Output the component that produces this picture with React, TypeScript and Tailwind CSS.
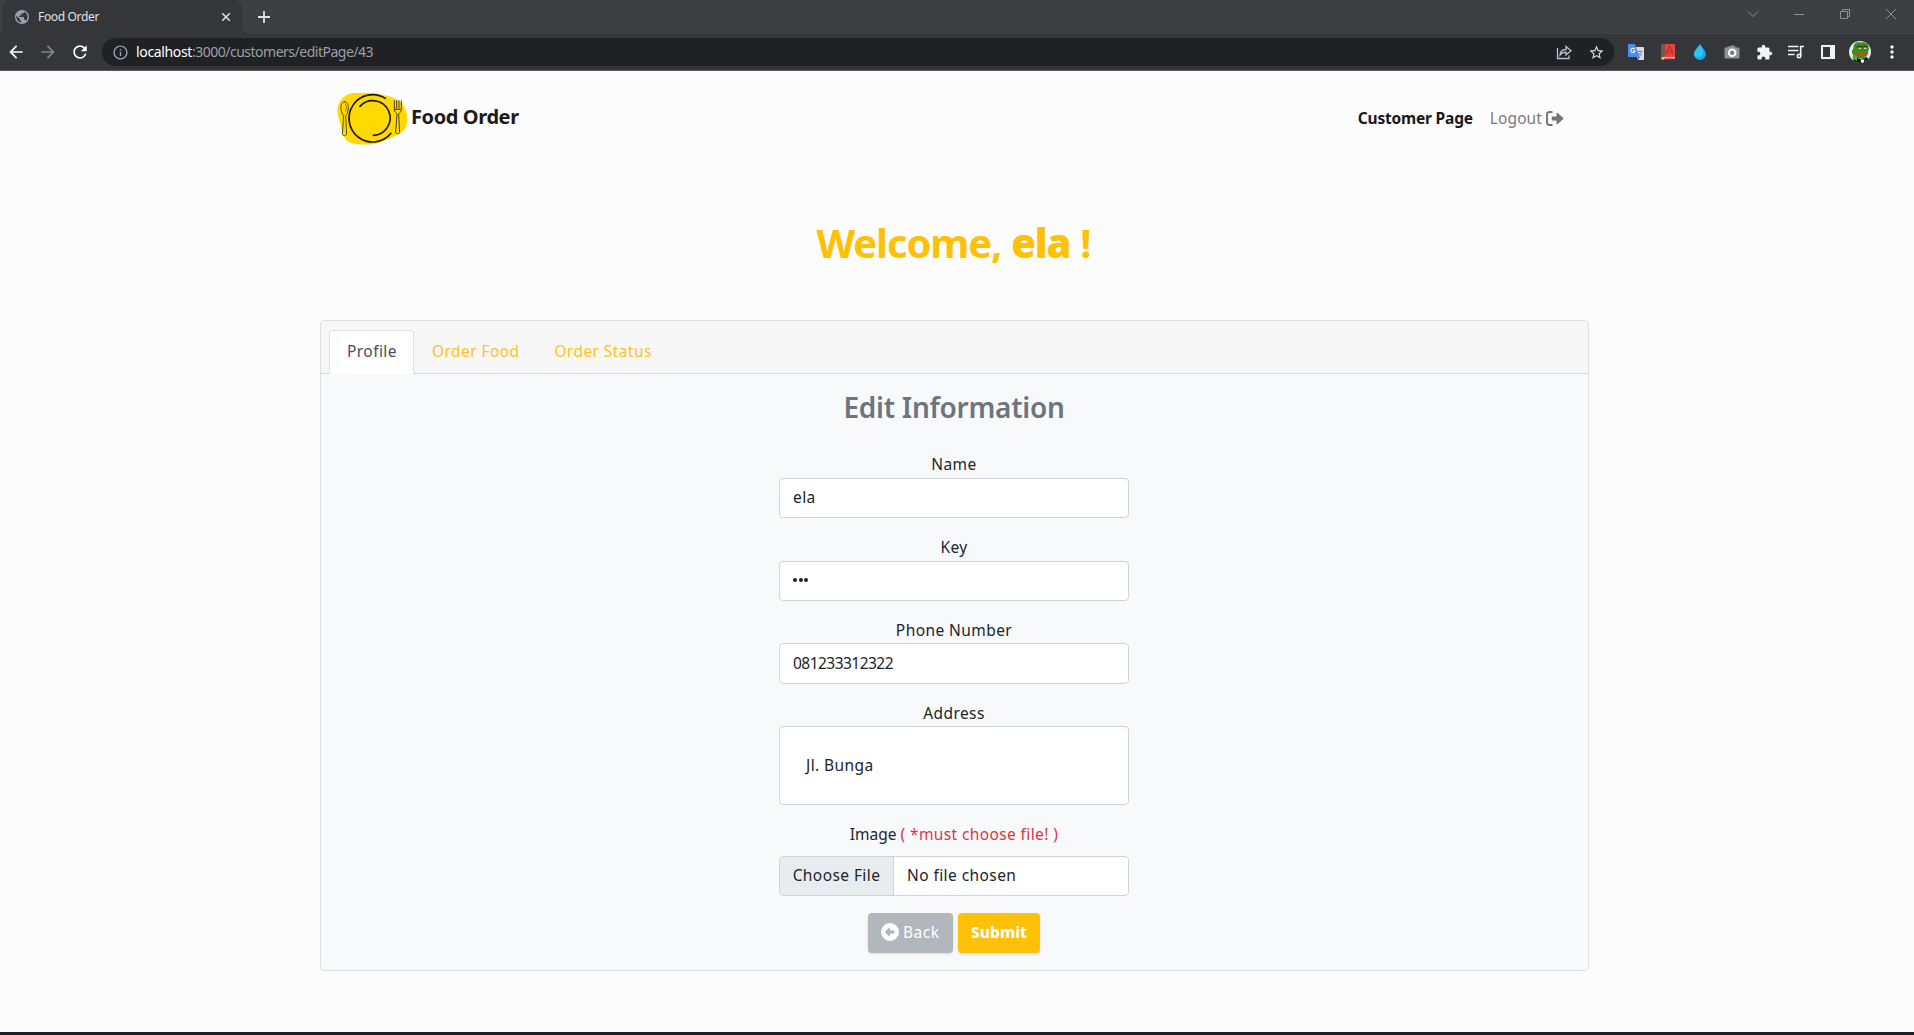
import React from "react";
import {
  MdArrowBack,
  MdArrowForward,
  MdRefresh,
  MdInfoOutline,
  MdStarBorder,
  MdExtension,
  MdMoreVert,
  MdPublic,
} from "react-icons/md";
import { FaCircleLeft } from "react-icons/fa6";

function TabStrip() {
  return (
    <div className="flex h-[34px] items-stretch bg-[#3c4043]">
      <div className="flex w-[2px] shrink-0 items-end bg-[#35363a]">
        <div className="h-full w-full rounded-br-[2px] bg-[#3c4043]" />
      </div>
      <div className="flex w-60 items-center rounded-t-lg bg-[#35363a] pr-[9px] pl-3">
        <MdPublic className="size-4 scale-105 text-[#9aa0a6]" />
        <span className="ml-2 flex-1 text-[12px] tracking-[-0.34px] text-[#dfe1e5]">Food Order</span>
        <svg className="size-[14px]" viewBox="0 0 14 14" stroke="#dfe1e5" strokeWidth="1.5">
          <path d="M3.2 3.2l7.6 7.6M10.8 3.2l-7.6 7.6" />
        </svg>
      </div>
      <div className="flex w-2 bg-[#35363a]">
        <div className="w-full rounded-bl-lg bg-[#3c4043]" />
      </div>
      <div className="flex w-7 items-center justify-center">
        <svg className="size-[14px]" viewBox="0 0 14 14" stroke="#dfe1e5" strokeWidth="1.8">
          <path d="M7 1v12M1 7h12" />
        </svg>
      </div>
      <div className="flex flex-1 justify-end">
        <WindowButton d="M2 4.5l5 5 5-5" />
        <WindowButton d="M2 7.5h10" />
        <WindowButton d="M2.5 4.5h7v7h-7zM4.5 4.5v-2h7v7h-2" />
        <WindowButton d="M2 2l10 10M12 2L2 12" />
      </div>
    </div>
  );
}

function WindowButton({ d }: { d: string }) {
  return (
    <div className="flex w-[46px] items-center justify-center pb-[6px]">
      <svg className="size-[14px]" viewBox="0 0 14 14" fill="none" stroke="#8e9193" strokeWidth="1">
        <path d={d} />
      </svg>
    </div>
  );
}

function Cell({ children }: { children: React.ReactNode }) {
  return <div className="flex w-8 shrink-0 items-center justify-center">{children}</div>;
}

function TranslateIcon() {
  return (
    <svg className="size-4" viewBox="0 0 16 16">
      <path d="M6 3h9a1 1 0 0 1 1 1v11a1 1 0 0 1-1 1h-5z" fill="#dadce0" />
      <path d="M9.5 7.5h5M12 6.2v1.3M13.7 7.5c-.5 2.3-1.8 3.6-3.4 4.6M10.6 9c.7 1.4 1.8 2.5 3.2 3.2" stroke="#80868b" strokeWidth="0.9" fill="none" />
      <path d="M10 13l2 0-2 3z" fill="#3367d6" />
      <path d="M1 0h6l4.5 13H1a1 1 0 0 1-1-1V1a1 1 0 0 1 1-1z" fill="#4c8bf5" />
      <path d="M6.6 5.2A2.1 2.1 0 1 0 6.9 7H5" stroke="#fff" strokeWidth="1.1" fill="none" />
    </svg>
  );
}

function BookIcon() {
  return (
    <svg className="size-4" viewBox="0 0 16 16">
      <path d="M1 0h3.5v13H1z" fill="#6b5a5a" />
      <path d="M4.5 0h10.5v13H4.5z" fill="#e5443a" />
      <path d="M6 10.5L9 2.500h1l3 8M7 8h5" stroke="#b52f27" strokeWidth="1.2" fill="none" />
      <path d="M1 13h14v2.500H1z" fill="#b93028" />
      <path d="M4 13.2h11v1.100H4z" fill="#f1e7e4" />
      <path d="M1.5 13h2.500v3l-1.200-.8-1.300.8z" fill="#f6c026" />
    </svg>
  );
}

function DropIcon() {
  return (
    <svg className="size-4" viewBox="0 0 16 16">
      <path d="M8 0C9 2.5 14 6.5 14 10.2A6 5.800 0 0 1 2 10.2C2 6.5 7 2.5 8 0z" fill="#1ea7e8" />
      <path d="M8 0C9 2.5 11.5 6 11 9.500S6 14 2.600 12C0 7.500 7 3 8 0z" fill="#2cc3f5" />
    </svg>
  );
}

function CameraIcon() {
  return (
    <svg className="size-4" viewBox="0 0 16 16">
      <path d="M1 3.500h2.500V2.200h2v1.300L6.500 1.500h4l1 2H14.500a1 1 0 0 1 1 1V13a1.500 1.500 0 0 1-1.500 1.500H2A1.500 1.500 0 0 1 .5 13V4z" fill="#929292" />
      <circle cx="8.2" cy="8.8" r="3.3" fill="#7c7c7c" stroke="#fff" strokeWidth="2" />
    </svg>
  );
}

function FrogAvatar() {
  return (
    <svg className="size-[22px]" viewBox="0 0 22 22">
      <defs>
        <clipPath id="avatar">
          <circle cx="11" cy="11" r="11" />
        </clipPath>
      </defs>
      <g clipPath="url(#avatar)">
        <path d="M0 0h22v22H0z" fill="#dff0f2" />
        <path d="M3 22l2-6 7 2 6-2 3 6z" fill="#15191f" />
        <path d="M11.5 18.500h4l-1 3.500h-2z" fill="#fff" />
        <path d="M4.500 7C4 2 8 .5 12 1.500c3-1 7 0 7.300 3.500 1 2 .5 4-.3 5.500.5 4-3 7-7.500 7S4 15 3.200 12C2.500 10 3.500 8.500 4.500 7z" fill="#3f8d18" />
        <path d="M3.500 15c2-2 4-1 4.500 1.500l0 3.500-4-2z" fill="#5aa72b" />
        <path d="M7.500 6c2-1.200 3.500-1 5 .2 1.500-1.200 4-1.200 6-.2" stroke="#1f4d0e" strokeWidth="1.3" fill="none" />
        <path d="M9.500 7.300h2.500M15 7.300h2.500" stroke="#e8eee2" strokeWidth="1" />
        <path d="M6 11.500c4 1.500 9 1.500 13.200 0M7.500 13c4 1.200 7 1.200 10.500 0" stroke="#b8502a" strokeWidth="1.500" fill="none" />
      </g>
    </svg>
  );
}

function Toolbar() {
  return (
    <div className="flex h-[37px] items-stretch border-b border-[#5b5660] bg-[#35363a] pt-1 pb-1">
      <div className="flex w-[102px] shrink-0">
        <Cell><MdArrowBack className="mr-px size-[20px] text-white" /></Cell>
        <Cell><MdArrowForward className="mr-px size-[20px] text-[#85878a]" /></Cell>
        <Cell><MdRefresh className="size-5 text-white" /></Cell>
      </div>
      <div className="flex flex-1 items-stretch rounded-full bg-[#202124] pr-[2px] pl-[10px]">
        <div className="flex w-[24px] items-center">
          <MdInfoOutline className="size-[17px] text-[#9aa0a6]" />
        </div>
        <div className="flex flex-1 items-center pb-px text-[14px] text-[#9aa0a6]">
          <span className="tracking-[-0.35px] text-white">localhost</span>
          <span className="tracking-[-0.5px]">:3000/customers/editPage/43</span>
        </div>
        <Cell>
          <svg className="size-4" viewBox="0 0 16 16" fill="none" stroke="#bdc1c6" strokeWidth="1.3">
            <path d="M1.500 4v10.500h11.500V11.500" />
            <path d="M4 11c.3-3.500 2.500-5.500 6-5.500V2.500l5 4.300-5 4V8.200C7.500 8.200 5.500 9 4 11z" />
          </svg>
        </Cell>
        <Cell><MdStarBorder className="size-[17px] text-[#dadce0]" /></Cell>
      </div>
      <div className="ml-[6px] flex shrink-0 pr-[6px]">
        <Cell><TranslateIcon /></Cell>
        <Cell><BookIcon /></Cell>
        <Cell><DropIcon /></Cell>
        <Cell><CameraIcon /></Cell>
        <Cell><MdExtension className="size-[17px] text-[#f1f3f4]" /></Cell>
        <Cell>
          <svg className="size-4" viewBox="0 0 16 16" fill="none" stroke="#f1f3f4" strokeWidth="1.6">
            <path d="M0 2.500h10.500M0 6.500h10.500M0 10.500h6.500M12.700 12V2.500H16" />
            <circle cx="11" cy="12" r="1.7" />
          </svg>
        </Cell>
        <Cell>
          <div className="h-[14px] w-[14px] border-2 border-r-[5px] border-[#f1f3f4]" />
        </Cell>
        <Cell><FrogAvatar /></Cell>
        <Cell><MdMoreVert className="size-5 text-[#f1f3f4]" /></Cell>
      </div>
    </div>
  );
}

function Logo() {
  return (
    <svg className="h-[54px] w-[72px]" viewBox="48 36 216 162" fill="none" strokeLinecap="round">
      <path d="M100 39H150C185 42 225 50 243 68C262 85 266 120 258 140C250 160 215 172 190 183C165 197 120 196 92 188C72 182 68 160 62 135C57 118 52 100 52 90C54 62 78 40 100 39Z" fill="#ffd900" />
      <path d="M196 55A71 71 0 1 0 213 160" stroke="#1d1a05" strokeWidth="5" />
      <path d="M120 79A52 52 0 1 1 160 166" stroke="#1d1a05" strokeWidth="5" />
      <path d="M74 65C63 65 61 80 64 92C66 102 70 105 71 108L67 163C68 168 79 168 80 163L77 108C80 104 85 96 85 84C85 72 81 65 74 65Z" stroke="#5e510a" strokeWidth="3" />
      <path d="M76 72C81 78 80 88 77 94" stroke="#5e510a" strokeWidth="2" />
      <path d="M223 62V88C223 97 230 98 231 102L227 158C228 162 238 162 239 158L236 102C238 98 244 96 244 88V62M230 62V85M237 62V85M224 88H243" stroke="#4d4206" strokeWidth="3" />
    </svg>
  );
}

function LogoutIcon() {
  return (
    <svg className="mb-px ml-[4px] h-[15px] w-[18px]" viewBox="0 0 18 15">
      <path d="M6.500 1H3.500Q1 1 1 3.500V11.500Q1 14 3.500 14H6.500" fill="none" stroke="#737373" strokeWidth="1.9" />
      <path d="M6.500 5.500H10.500V2.200Q10.800 1.300 11.700 2L17 6.800Q17.500 7.500 17 8.200L11.700 13Q10.800 13.700 10.500 12.800V9.500H6.500Q5.700 9.500 5.700 8.700V6.300Q5.700 5.500 6.500 5.500Z" fill="#737373" />
    </svg>
  );
}

function Field({ label, labelClass = "", children }: { label: string; labelClass?: string; children: React.ReactNode }) {
  return (
    <label className="mb-[16.37px] block">
      <span className={`block h-[26px] text-center leading-6 ${labelClass}`}>{label}</span>
      {children}
    </label>
  );
}

const inputClass =
  "block h-[40.3px] w-full rounded border border-[#ced4da] bg-white px-[13px] pb-[2px] tracking-[0.42px] text-[#212529] outline-none";

export default function App() {
  return (
    <div className="flex h-[1035px] flex-col overflow-hidden bg-[#fcfcfc] font-['Noto_Sans',sans-serif] text-[15.5px] tracking-[0.42px] text-[#212529]">
      <TabStrip />
      <Toolbar />

      <main className="w-full flex-1 pr-[5px]">
        <div className="mx-auto w-[1269px]">
          <nav className="flex h-24 items-center justify-between pr-[25px] pl-4">
            <div className="flex items-center">
              <Logo />
              <span className="ml-[3px] pb-[5px] text-[20px] font-bold tracking-[-0.4px] text-[#1b1b1b]">Food Order</span>
            </div>
            <div className="flex items-center">
              <span className="font-bold tracking-[-0.19px] text-[#191919]">Customer Page</span>
              <span className="ml-[17px] tracking-[0.1px] text-[#7b7b7b]">Logout</span>
              <LogoutIcon />
            </div>
          </nav>

          <h1 className="mt-[46px] flex h-[60px] items-center justify-center pr-[2px] text-[40px] font-bold tracking-[-1.1px] text-[#ffc107]">
            <span>Welcome,</span>
            <span className="ml-[10px] font-black tracking-[-1.2px]">ela</span>
            <span className="ml-[10px]">!</span>
          </h1>

          <section className="mt-[47px] h-[651px] rounded border border-[#dfdfdf] bg-[#f8f9fb]">
            <div className="flex h-[53px] items-end rounded-t border-b border-[#d8d8d8] bg-[#f7f7f7] pl-2">
              <div className="-mb-px flex h-[44px] w-[85px] items-center justify-center rounded-t border border-b-0 border-[#dee2e6] bg-white pb-[2px] pl-px text-[#495057]">
                Profile
              </div>
              <div className="flex h-[43px] items-center pr-[17px] pl-[18px] text-[#ffc220]">Order Food</div>
              <div className="flex h-[43px] items-center px-[18px] text-[#ffc220]">Order Status</div>
            </div>

            <div className="mx-auto w-[351px] pt-4 pr-px">
              <h2 className="h-[62px] text-center text-[28px] leading-[34px] font-semibold tracking-[-0.28px] text-[#6c757d]">
                Edit Information
              </h2>
              <Field label="Name">
                <input className={inputClass} defaultValue="ela" />
              </Field>
              <Field label="Key">
                <div className={`${inputClass} flex items-center gap-[1.5px]`}>
                  <i className="size-1 rounded-full bg-[#212529]" />
                  <i className="size-1 rounded-full bg-[#212529]" />
                  <i className="size-1 rounded-full bg-[#212529]" />
                </div>
              </Field>
              <Field label="Phone Number" labelClass="pt-px">
                <div className={`${inputClass} flex items-center pb-0!`}>
                  <span className="tracking-[-0.53px]">081233312322</span>
                </div>
              </Field>
              <Field label="Address" labelClass="pt-px">
                <div className={`${inputClass} flex h-[79px]! items-center px-[26px]! pb-0!`}>Jl. Bunga</div>
              </Field>
              <div className="mb-[10px] pt-px text-center leading-6">
                <span className="tracking-[0px]">Image </span>
                <span className="tracking-[0.38px] text-[#dc3545]">( *must choose file! )</span>
              </div>
              <div className="flex h-10 w-full overflow-hidden rounded border border-[#ced4da] bg-white">
                <span className="flex w-[114px] items-center justify-center border-r border-[#ced4da] bg-[#e9ecef] pb-[2px]">Choose File</span>
                <span className="flex items-center pb-[2px] pl-[13px]">No file chosen</span>
              </div>
              <div className="mt-[17px] flex justify-center gap-[5px] text-white">
                <button className="flex h-10 w-[85px] items-center rounded bg-[#b1b7bc] pl-[13px] shadow-sm">
                  <FaCircleLeft className="mb-[3px] size-[18px]" />
                  <span className="ml-[4px] pb-[2px] tracking-[0.5px]">Back</span>
                </button>
                <button className="h-10 w-[82px] rounded bg-[#ffc107] pb-[2px] font-extrabold tracking-[0px] shadow-sm">Submit</button>
              </div>
            </div>
          </section>
        </div>
      </main>
      <div className="h-[3px] shrink-0 bg-[#1f1d26]" />
    </div>
  );
}
